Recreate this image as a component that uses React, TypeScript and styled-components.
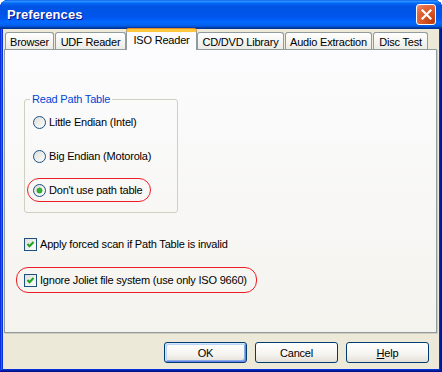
import styled, { createGlobalStyle, css } from 'styled-components';

const GlobalStyle = createGlobalStyle`
  html, body {
    margin: 0;
    padding: 0;
    background: #ffffff;
  }
  body {
    font-family: 'Liberation Sans', Arial, sans-serif;
    font-size: 11px;
    letter-spacing: -0.2px;
    color: #000000;
  }
`;

const TABS = [
  { label: 'Browser', width: 49 },
  { label: 'UDF Reader', width: 71 },
  { label: 'ISO Reader', width: 71, active: true },
  { label: 'CD/DVD Library', width: 87 },
  { label: 'Audio Extraction', width: 87 },
  { label: 'Disc Test', width: 55 },
];

const RADIOS = [
  { label: 'Little Endian (Intel)' },
  { label: 'Big Endian (Motorola)' },
  { label: "Don't use path table", checked: true, marked: true },
];

const CHECKS = [
  { label: 'Apply forced scan if Path Table is invalid' },
  { label: 'Ignore Joliet file system (use only ISO 9660)', marked: true },
];

function RadioIcon({ checked }: { checked?: boolean }) {
  return (
    <svg width="13" height="13" viewBox="0 0 13 13">
      <defs>
        <linearGradient id="radioFill" x1="0" y1="0" x2="1" y2="1">
          <stop offset="0" stopColor="#dcdcd7" />
          <stop offset="1" stopColor="#ffffff" />
        </linearGradient>
      </defs>
      <circle cx="6.5" cy="6.5" r="6" fill="url(#radioFill)" stroke="#1c5180" />
      {checked && <circle cx="6.5" cy="6.5" r="2.6" fill="#2fb52f" stroke="#1e8d1e" strokeWidth="0.6" />}
    </svg>
  );
}

function CheckIcon() {
  return (
    <svg width="13" height="13" viewBox="0 0 13 13">
      <defs>
        <linearGradient id="checkFill" x1="0" y1="0" x2="1" y2="1">
          <stop offset="0" stopColor="#dcdcd7" />
          <stop offset="1" stopColor="#ffffff" />
        </linearGradient>
      </defs>
      <rect x="0.5" y="0.5" width="12" height="12" fill="url(#checkFill)" stroke="#1c5180" />
      <path d="M3.5 6 L5.5 8.2 L9.5 4" fill="none" stroke="#21a121" strokeWidth="2" />
    </svg>
  );
}

export default function App() {
  return (
    <>
      <GlobalStyle />
      <Window>
        <TitleBar>
          <Title>Preferences</Title>
          <CloseButton>
            <svg width="11" height="11" viewBox="0 0 11 11">
              <path d="M1.5 1.5 L9.5 9.5 M9.5 1.5 L1.5 9.5" stroke="#ffffff" strokeWidth="2.2" strokeLinecap="square" />
            </svg>
          </CloseButton>
        </TitleBar>
        <Client>
          <TabStrip>
            {TABS.map((t) => (
              <Tab key={t.label} $width={t.width} $active={t.active}>
                {t.label}
              </Tab>
            ))}
          </TabStrip>
          <TabPanel>
            <GroupBox>
              <Legend>Read Path Table</Legend>
              <OptionList>
                {RADIOS.map((r) => (
                  <RadioRow key={r.label} $marked={r.marked}>
                    <RadioIcon checked={r.checked} />
                    <span>{r.label}</span>
                  </RadioRow>
                ))}
              </OptionList>
            </GroupBox>
            <CheckList>
              {CHECKS.map((c) => (
                <CheckRow key={c.label} $marked={c.marked}>
                  <CheckIcon />
                  <span>{c.label}</span>
                </CheckRow>
              ))}
            </CheckList>
          </TabPanel>
          <ButtonRow>
            <Button $default>OK</Button>
            <Button>Cancel</Button>
            <Button>
              <u>H</u>elp
            </Button>
          </ButtonRow>
        </Client>
      </Window>
    </>
  );
}

const Window = styled.div`
  width: 442px;
  height: 372px;
  box-sizing: border-box;
  display: flex;
  flex-direction: column;
  border-radius: 8px 8px 0 0;
  background: #0831d9;
  box-shadow: inset -1px -1px #00138c, inset 1px 1px #0831d9, inset -2px -2px #001ea0,
    inset 2px 2px #166aee;
  overflow: hidden;
`;

const TitleBar = styled.div`
  height: 29px;
  flex: none;
  display: flex;
  align-items: center;
  justify-content: space-between;
  padding: 0 6px 1px 7px;
  box-sizing: border-box;
  background: linear-gradient(
    180deg,
    #0058ee 0%,
    #3593ff 4%,
    #288eff 6%,
    #127dff 8%,
    #036ffc 10%,
    #0262ee 14%,
    #0057e5 20%,
    #0054e3 24%,
    #0055eb 56%,
    #005bf5 66%,
    #026afe 76%,
    #0062ef 86%,
    #0052d6 92%,
    #0040ab 94%,
    #003092 100%
  );
`;

const Title = styled.div`
  font-family: 'Liberation Sans', Arial, sans-serif;
  font-size: 13px;
  font-weight: bold;
  color: #ffffff;
  text-shadow: 1px 1px #0f1089;
  letter-spacing: 0.1px;
`;

const CloseButton = styled.div`
  width: 20px;
  height: 21px;
  box-sizing: border-box;
  border: 1px solid #ffffff;
  border-radius: 3px;
  display: flex;
  align-items: center;
  justify-content: center;
  background: radial-gradient(circle at 85% 85%, #c13c0a 0%, #dc5a2a 50%, #e46c45 75%, #f09a78 100%);
`;

const Client = styled.div`
  flex: 1;
  display: flex;
  flex-direction: column;
  margin: 0 3px 3px 3px;
  padding: 0 2px 0 1px;
  background: #ece9d8;
`;

const TabStrip = styled.div`
  height: 20px;
  display: flex;
  align-items: flex-end;
  gap: 1px;
  padding-left: 1px;
  position: relative;
  z-index: 1;
`;

const Tab = styled.div<{ $width: number; $active?: boolean }>`
  width: ${(p) => p.$width}px;
  box-sizing: border-box;
  height: 17px;
  display: flex;
  align-items: center;
  justify-content: center;
  padding-top: 1px;
  border: 1px solid #919b9c;
  border-bottom: none;
  border-radius: 3px 3px 0 0;
  background: linear-gradient(180deg, #ffffff 0%, #f7f7f5 40%, #ecebe6 100%);
  white-space: nowrap;

  ${(p) =>
    p.$active &&
    css`
      height: 21px;
      margin: 0 -1px -1px -1px;
      padding-top: 0;
      padding-bottom: 3px;
      border-top: 3px solid #ffc73c;
      box-shadow: 0 -1px #e68b2c;
      border-radius: 3px 3px 0 0;
      background: #fcfcfe;
    `}
`;

const TabPanel = styled.div`
  height: 284px;
  box-sizing: border-box;
  border: 1px solid #919b9c;
  box-shadow: 1px 1px #d0cec3;
  background: linear-gradient(180deg, #fcfcfe 0%, #f4f3ee 100%);
  display: flex;
  flex-direction: column;
  align-items: flex-start;
  padding: 43px 0 0 11px;
`;

const GroupBox = styled.fieldset`
  width: 154px;
  box-sizing: border-box;
  margin: 0 0 0 8px;
  padding: 4px 0 10px 2px;
  border: 1px solid #d0d0bf;
  border-radius: 3px;
`;

const Legend = styled.legend`
  color: #0046d5;
  padding: 0 2px;
  margin-left: 3px;
  line-height: 13px;
`;

const OptionList = styled.div`
  display: flex;
  flex-direction: column;
  align-items: flex-start;
  gap: 10px;
`;

const markedRow = css<{ $marked?: boolean }>`
  display: inline-flex;
  align-items: center;
  gap: 3px;
  box-sizing: border-box;
  border: 1px solid ${(p) => (p.$marked ? '#ee1c24' : 'transparent')};
  border-radius: 12px;
  white-space: nowrap;
`;

const RadioRow = styled.div<{ $marked?: boolean }>`
  ${markedRow};
  height: 24px;
  padding: 0 7px 0 5px;
`;

const CheckList = styled.div`
  display: flex;
  flex-direction: column;
  align-items: flex-start;
  gap: 10px;
  margin-top: 18px;
`;

const CheckRow = styled.div<{ $marked?: boolean }>`
  ${markedRow};
  height: 26px;
  padding: 0 9px 0 7px;
`;

const ButtonRow = styled.div`
  display: flex;
  justify-content: flex-end;
  gap: 8px;
  padding: 9px 8px 0 0;
`;

const Button = styled.div<{ $default?: boolean }>`
  width: 83px;
  height: 21px;
  box-sizing: border-box;
  display: flex;
  align-items: center;
  justify-content: center;
  border: 1px solid #003c74;
  border-radius: 3px;
  background: linear-gradient(180deg, #ffffff 0%, #f5f4f0 60%, #e3e0d6 100%);
  ${(p) =>
    p.$default &&
    css`
      box-shadow: inset 1px 1px #cee7ff, inset -1px -1px #6982ee, inset 2px 2px #bcd4f6,
        inset -2px -2px #89ade4;
    `}
`;
